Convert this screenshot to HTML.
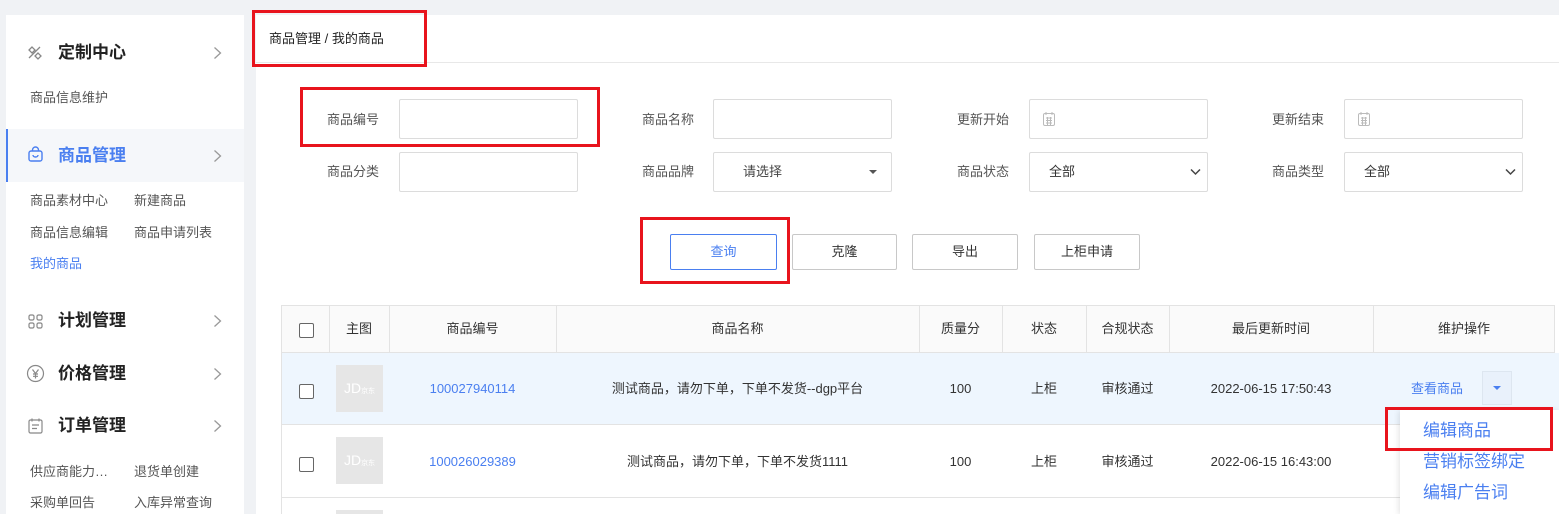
<!DOCTYPE html>
<html style="width:1559px;height:514px;overflow:hidden"><head><meta charset="utf-8"><style>
*{margin:0;padding:0;box-sizing:border-box}
body{width:1559px;height:514px;overflow:hidden;background:#f0f2f5;font-family:"Liberation Sans","Noto Sans CJK SC",sans-serif;color:#333;position:relative}
.a{position:absolute;white-space:nowrap}
.side{left:6px;top:15px;width:238px;height:499px;background:#fff}
.main{left:256px;top:15px;width:1303px;height:499px;background:#fff}
.h{font-size:17px;font-weight:bold;color:#222;line-height:20px}
.s{font-size:13px;color:#555;line-height:16px}
.chev{width:9px;height:14px}
.red{border:3px solid #e8141d}
.lab{font-size:13px;color:#555;line-height:16px}
.inp{border:1px solid #dcdcdc;border-radius:2px;height:40px;width:179px;background:#fff}
.btn{border:1px solid #c8c8c8;border-radius:2px;height:36px;font-size:13px;line-height:34px;text-align:center;color:#333;background:#fff}
.th{font-size:13px;color:#333;line-height:16px;text-align:center}
.td{font-size:13px;color:#333;line-height:16px;text-align:center}
.cb{width:15px;height:15px;border:1.5px solid #666;border-radius:2px;background:#fff}
.img{width:47px;height:47px;background:#e6e6e6;color:#fff;font-size:14px;line-height:47px;text-align:center;overflow:hidden}
.blue{color:#4a7ff0}
</style></head><body>
<div class="a side"></div>
<div class="a main"></div>

<!-- sidebar -->
<svg class="a" style="left:26px;top:44px" width="18" height="18" viewBox="0 0 18 18" fill="none" stroke="#888" stroke-width="1.3"><path d="M3 14L14 3M6 3l-3 3 3 3 3-3zM12 9l-3 3 3 3 3-3z"/></svg>
<div class="a h" style="left:58px;top:43px">定制中心</div>
<svg class="a chev" style="left:213px;top:46px" viewBox="0 0 9 14" fill="none" stroke="#999" stroke-width="1.3"><path d="M1.5 1.5l6 5.5-6 5.5"/></svg>
<div class="a s" style="left:30px;top:90px">商品信息维护</div>
<div class="a" style="left:6px;top:129px;width:238px;height:53px;background:#f5f7fa;border-left:2px solid #4a7ff0"></div>
<svg class="a" style="left:27px;top:146px" width="17" height="17" viewBox="0 0 17 17" fill="none" stroke="#4a7ff0" stroke-width="1.4"><rect x="2" y="5" width="13" height="10" rx="2"/><path d="M5.5 5V4a3 3 0 0 1 6 0v1M6 9a2.5 2 0 0 0 5 0"/></svg>
<div class="a h" style="left:58px;top:146px;color:#4a7ff0">商品管理</div>
<svg class="a chev" style="left:213px;top:149px" viewBox="0 0 9 14" fill="none" stroke="#999" stroke-width="1.3"><path d="M1.5 1.5l6 5.5-6 5.5"/></svg>
<div class="a s" style="left:30px;top:193px">商品素材中心</div><div class="a s" style="left:134px;top:193px">新建商品</div>
<div class="a s" style="left:30px;top:225px">商品信息编辑</div><div class="a s" style="left:134px;top:225px">商品申请列表</div>
<div class="a s" style="left:30px;top:256px;color:#4a7ff0">我的商品</div>
<svg class="a" style="left:27px;top:313px" width="17" height="17" viewBox="0 0 17 17" fill="none" stroke="#888" stroke-width="1.2"><rect x="2" y="2" width="5" height="5" rx="1.5"/><rect x="10" y="2" width="5" height="5" rx="1.5"/><rect x="2" y="10" width="5" height="5" rx="1.5"/><rect x="10" y="10" width="5" height="5" rx="1.5"/></svg>
<div class="a h" style="left:58px;top:311px">计划管理</div>
<svg class="a chev" style="left:213px;top:314px" viewBox="0 0 9 14" fill="none" stroke="#999" stroke-width="1.3"><path d="M1.5 1.5l6 5.5-6 5.5"/></svg>
<svg class="a" style="left:26px;top:364px" width="19" height="19" viewBox="0 0 19 19" fill="none" stroke="#888" stroke-width="1.2"><circle cx="9.5" cy="9.5" r="8"/><path d="M6.5 5.5l3 4 3-4M9.5 9.5v5M7 10h5M7 12.3h5"/></svg>
<div class="a h" style="left:58px;top:364px">价格管理</div>
<svg class="a chev" style="left:213px;top:367px" viewBox="0 0 9 14" fill="none" stroke="#999" stroke-width="1.3"><path d="M1.5 1.5l6 5.5-6 5.5"/></svg>
<svg class="a" style="left:27px;top:417px" width="17" height="18" viewBox="0 0 17 18" fill="none" stroke="#888" stroke-width="1.2"><rect x="2" y="3" width="13" height="13" rx="1.5"/><path d="M5 1.5v3M12 1.5v3M5 8h7M5 11.5h5"/></svg>
<div class="a h" style="left:58px;top:416px">订单管理</div>
<svg class="a chev" style="left:213px;top:419px" viewBox="0 0 9 14" fill="none" stroke="#999" stroke-width="1.3"><path d="M1.5 1.5l6 5.5-6 5.5"/></svg>
<div class="a s" style="left:30px;top:464px">供应商能力…</div><div class="a s" style="left:134px;top:464px">退货单创建</div>
<div class="a s" style="left:30px;top:495px">采购单回告</div><div class="a s" style="left:134px;top:495px">入库异常查询</div>

<!-- header -->
<div class="a" style="left:256px;top:62px;width:1303px;height:1px;background:#e8e8e8"></div>
<div class="a" style="left:269px;top:31px;font-size:13px;line-height:16px;color:#222">商品管理 / 我的商品</div>
<div class="a red" style="left:252px;top:10px;width:175px;height:57px"></div>

<!-- form -->
<div class="a lab" style="left:327px;top:112px">商品编号</div><div class="a inp" style="left:399px;top:99px"></div>
<div class="a lab" style="left:327px;top:164px">商品分类</div><div class="a inp" style="left:399px;top:152px"></div>
<div class="a lab" style="left:642px;top:112px">商品名称</div><div class="a inp" style="left:713px;top:99px"></div>
<div class="a lab" style="left:642px;top:164px">商品品牌</div><div class="a inp" style="left:713px;top:152px"></div>
<div class="a lab" style="left:743px;top:164px;color:#444">请选择</div>
<div class="a" style="left:869px;top:170px;border:4px solid transparent;border-top:4px solid #555;width:0;height:0"></div>
<div class="a lab" style="left:957px;top:112px">更新开始</div><div class="a inp" style="left:1029px;top:99px"></div>
<div class="a lab" style="left:957px;top:164px">商品状态</div><div class="a inp" style="left:1029px;top:152px"></div>
<div class="a lab" style="left:1049px;top:164px;color:#333">全部</div>
<div class="a lab" style="left:1272px;top:112px">更新结束</div><div class="a inp" style="left:1344px;top:99px"></div>
<div class="a lab" style="left:1272px;top:164px">商品类型</div><div class="a inp" style="left:1344px;top:152px"></div>
<div class="a lab" style="left:1364px;top:164px;color:#333">全部</div>
<svg class="a" style="left:1042px;top:111px" width="14" height="16" viewBox="0 0 14 16" fill="none" stroke="#bbb" stroke-width="1"><rect x="1.5" y="2.5" width="11" height="12" rx="1.5"/><path d="M4 1v3M10 1v3M4 7h6M4 9.5h6M4 12h6M5.5 6v8M8.5 6v8"/></svg>
<svg class="a" style="left:1357px;top:111px" width="14" height="16" viewBox="0 0 14 16" fill="none" stroke="#bbb" stroke-width="1"><rect x="1.5" y="2.5" width="11" height="12" rx="1.5"/><path d="M4 1v3M10 1v3M4 7h6M4 9.5h6M4 12h6M5.5 6v8M8.5 6v8"/></svg>
<svg class="a" style="left:1190px;top:168px" width="11" height="8" viewBox="0 0 11 8" fill="none" stroke="#444" stroke-width="1.5"><path d="M1 1.5l4.5 4.5 4.5-4.5"/></svg>
<svg class="a" style="left:1505px;top:168px" width="11" height="8" viewBox="0 0 11 8" fill="none" stroke="#444" stroke-width="1.5"><path d="M1 1.5l4.5 4.5 4.5-4.5"/></svg>
<div class="a red" style="left:300px;top:87px;width:300px;height:60px"></div>

<!-- buttons -->
<div class="a btn" style="left:670px;top:234px;width:107px;border-color:#4a7ff0;color:#4a7ff0">查询</div>
<div class="a btn" style="left:792px;top:234px;width:105px">克隆</div>
<div class="a btn" style="left:912px;top:234px;width:106px">导出</div>
<div class="a btn" style="left:1034px;top:234px;width:106px">上柜申请</div>
<div class="a red" style="left:640px;top:217px;width:150px;height:67px"></div>

<!-- table -->
<div class="a" style="left:281px;top:305px;width:1274px;height:48px;background:#fafafa;border:1px solid #e3e3e3"></div>
<div class="a" style="left:281px;top:353px;width:1278px;height:71px;background:#eef6fe"></div>
<div class="a" style="left:281px;top:424px;width:1278px;height:1px;background:#e3e3e3"></div>
<div class="a" style="left:281px;top:497px;width:1278px;height:1px;background:#e3e3e3"></div>
<div class="a" style="left:281px;top:305px;width:1px;height:209px;background:#e3e3e3"></div>
<div class="a" style="left:329px;top:305px;width:1px;height:48px;background:#e3e3e3"></div>
<div class="a" style="left:389px;top:305px;width:1px;height:48px;background:#e3e3e3"></div>
<div class="a" style="left:556px;top:305px;width:1px;height:48px;background:#e3e3e3"></div>
<div class="a" style="left:919px;top:305px;width:1px;height:48px;background:#e3e3e3"></div>
<div class="a" style="left:1002px;top:305px;width:1px;height:48px;background:#e3e3e3"></div>
<div class="a" style="left:1086px;top:305px;width:1px;height:48px;background:#e3e3e3"></div>
<div class="a" style="left:1169px;top:305px;width:1px;height:48px;background:#e3e3e3"></div>
<div class="a" style="left:1373px;top:305px;width:1px;height:48px;background:#e3e3e3"></div>

<div class="a cb" style="left:299px;top:323px"></div>
<div class="a th" style="left:329px;top:321px;width:60px">主图</div>
<div class="a th" style="left:389px;top:321px;width:167px">商品编号</div>
<div class="a th" style="left:556px;top:321px;width:363px">商品名称</div>
<div class="a th" style="left:919px;top:321px;width:83px">质量分</div>
<div class="a th" style="left:1002px;top:321px;width:84px">状态</div>
<div class="a th" style="left:1086px;top:321px;width:83px">合规状态</div>
<div class="a th" style="left:1169px;top:321px;width:204px">最后更新时间</div>
<div class="a th" style="left:1373px;top:321px;width:182px">维护操作</div>

<div class="a cb" style="left:299px;top:384px"></div>
<div class="a img" style="left:336px;top:365px">JD<span style="font-size:7px">京东</span></div>
<div class="a td blue" style="left:389px;top:381px;width:167px">100027940114</div>
<div class="a td" style="left:556px;top:381px;width:363px">测试商品，请勿下单，下单不发货--dgp平台</div>
<div class="a td" style="left:919px;top:381px;width:83px">100</div>
<div class="a td" style="left:1002px;top:381px;width:84px">上柜</div>
<div class="a td" style="left:1086px;top:381px;width:83px">审核通过</div>
<div class="a td" style="left:1169px;top:381px;width:204px">2022-06-15 17:50:43</div>
<div class="a td blue" style="left:1411px;top:381px">查看商品</div>
<div class="a" style="left:1482px;top:371px;width:30px;height:34px;background:#e9f1fb;border:1px solid #dde6f0"></div>
<div class="a" style="left:1493px;top:386px;border:4px solid transparent;border-top:4px solid #4a7ff0;width:0;height:0"></div>

<div class="a cb" style="left:299px;top:457px"></div>
<div class="a img" style="left:336px;top:437px">JD<span style="font-size:7px">京东</span></div>
<div class="a td blue" style="left:389px;top:454px;width:167px">100026029389</div>
<div class="a td" style="left:556px;top:454px;width:363px">测试商品，请勿下单，下单不发货1111</div>
<div class="a td" style="left:919px;top:454px;width:83px">100</div>
<div class="a td" style="left:1002px;top:454px;width:84px">上柜</div>
<div class="a td" style="left:1086px;top:454px;width:83px">审核通过</div>
<div class="a td" style="left:1169px;top:454px;width:204px">2022-06-15 16:43:00</div>
<div class="a img" style="left:336px;top:510px;height:4px"></div>

<!-- dropdown -->
<div class="a" style="left:1400px;top:410px;width:159px;height:104px;background:#fff;box-shadow:-1px 1px 6px rgba(0,0,0,.12)"></div>
<div class="a blue" style="left:1423px;top:421px;font-size:17px;line-height:20px">编辑商品</div>
<div class="a blue" style="left:1423px;top:452px;font-size:17px;line-height:20px">营销标签绑定</div>
<div class="a blue" style="left:1423px;top:483px;font-size:17px;line-height:20px">编辑广告词</div>
<div class="a red" style="left:1385px;top:407px;width:168px;height:44px"></div>
</body></html>
